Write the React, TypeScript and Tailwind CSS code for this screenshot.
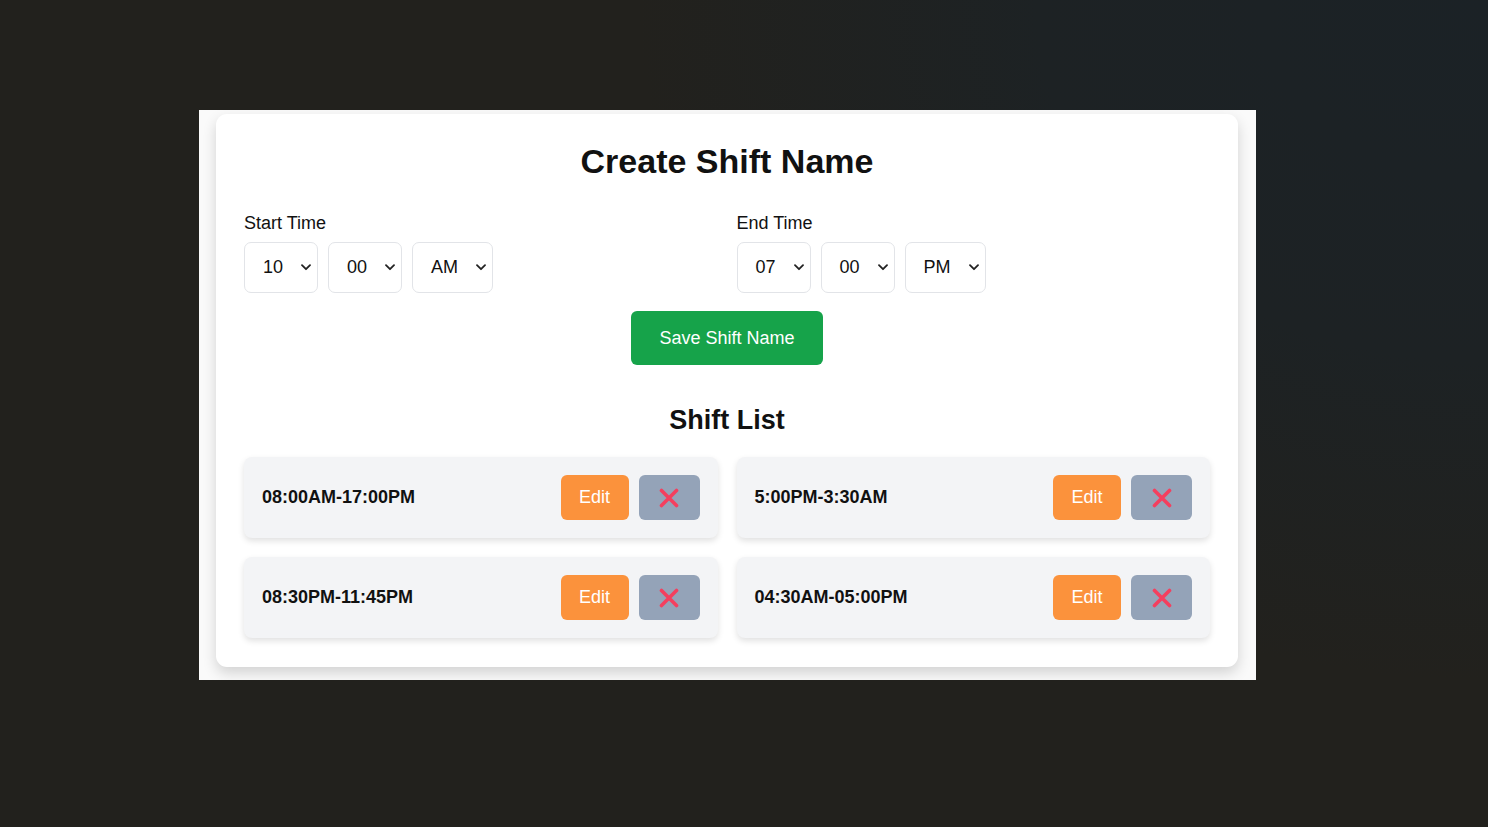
import React from "react";

function Chevron() {
  return (
    <svg width="10" height="7" viewBox="0 0 10 7" fill="none" className="shrink-0">
      <path d="M1 1.2l4 4 4-4" stroke="#222" strokeWidth="1.8" strokeLinecap="round" strokeLinejoin="round" />
    </svg>
  );
}

function SelectBox({ value, width }: { value: string; width: string }) {
  return (
    <div
      className={`${width} h-[51px] flex items-center justify-between pl-[18px] pr-[6px] rounded-[7px] border border-[#e2e4e8] bg-white text-[18px] text-[#111]`}
    >
      <span>{value}</span>
      <Chevron />
    </div>
  );
}

function XIcon() {
  return (
    <svg width="20" height="20" viewBox="0 0 20 20" fill="none">
      <path d="M2.5 2.5l15 15M17.5 2.5l-15 15" stroke="#f43f5e" strokeWidth="3.6" strokeLinecap="round" />
    </svg>
  );
}

function ShiftItem({ label }: { label: string }) {
  return (
    <div className="h-[81px] flex items-center justify-between pl-[18px] pr-[18px] rounded-[8px] bg-[#f3f4f6] shadow-[0_3px_6px_rgba(0,0,0,0.12)]">
      <span className="text-[18px] font-bold text-[#111]">{label}</span>
      <div className="flex items-center gap-[10px]">
        <button className="w-[68px] h-[45px] rounded-[6px] bg-[#fb923c] text-white text-[18px] flex items-center justify-center">
          Edit
        </button>
        <button className="w-[61px] h-[45px] rounded-[6px] bg-[#94a3b8] flex items-center justify-center">
          <XIcon />
        </button>
      </div>
    </div>
  );
}

export default function App() {
  return (
    <div
      className="w-[1488px] h-[827px] overflow-hidden bg-[#22211d] bg-[radial-gradient(ellipse_1000px_800px_at_100%_0%,#1b2226_0%,#1d2224_45%,#22211d_85%)] pl-[199px] pt-[110px]"
      style={{ fontFamily: '"Liberation Sans", Arial, sans-serif' }}
    >
      <div className="w-[1057px] h-[570px] bg-[#fafafa] overflow-hidden px-[17px] pt-[4px]">
        <div className="w-[1022px] bg-white rounded-[11px] shadow-[0_6px_14px_rgba(0,0,0,0.16)] px-[28px] pt-[27px] pb-[29px]">
          <h1 className="text-center text-[34px] leading-[40px] font-bold text-[#111]">Create Shift Name</h1>

          <div className="grid grid-cols-2 gap-x-[19px] mt-[31px]">
            <div>
              <div className="text-[18px] leading-[22px] text-[#111]">Start Time</div>
              <div className="flex gap-[10px] mt-[8px]">
                <SelectBox value="10" width="w-[74px]" />
                <SelectBox value="00" width="w-[74px]" />
                <SelectBox value="AM" width="w-[81px]" />
              </div>
            </div>
            <div>
              <div className="text-[18px] leading-[22px] text-[#111]">End Time</div>
              <div className="flex gap-[10px] mt-[8px]">
                <SelectBox value="07" width="w-[74px]" />
                <SelectBox value="00" width="w-[74px]" />
                <SelectBox value="PM" width="w-[81px]" />
              </div>
            </div>
          </div>

          <div className="flex justify-center mt-[18px]">
            <button className="w-[192px] h-[54px] rounded-[6px] bg-[#16a34a] text-white text-[18px]">
              Save Shift Name
            </button>
          </div>

          <h2 className="text-center text-[27px] leading-[32px] font-bold text-[#111] mt-[39px]">Shift List</h2>

          <div className="grid grid-cols-2 gap-x-[19px] gap-y-[19px] mt-[21px]">
            <ShiftItem label="08:00AM-17:00PM" />
            <ShiftItem label="5:00PM-3:30AM" />
            <ShiftItem label="08:30PM-11:45PM" />
            <ShiftItem label="04:30AM-05:00PM" />
          </div>
        </div>
      </div>
    </div>
  );
}
